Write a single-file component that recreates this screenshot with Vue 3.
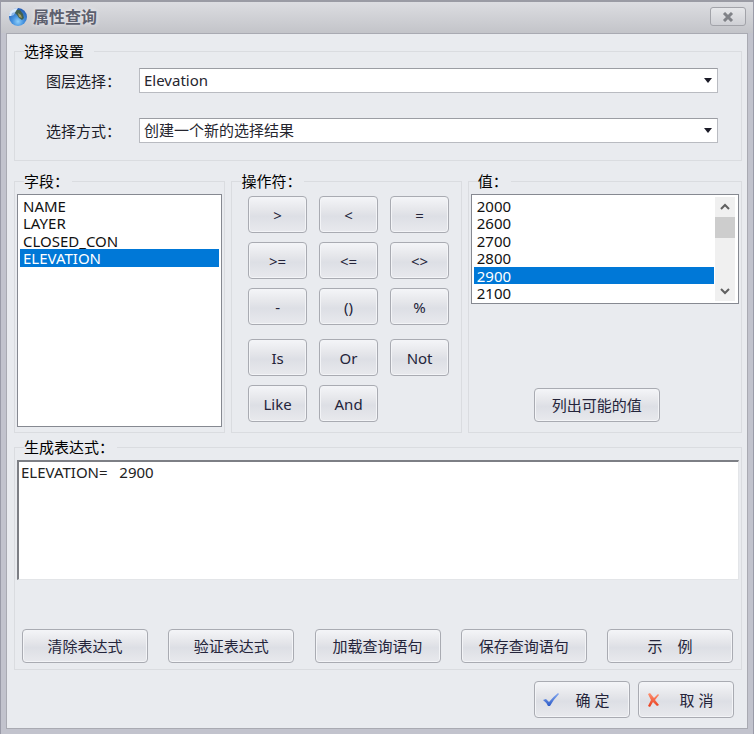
<template>
  <div class="window">
    <header class="title-bar">
      <svg class="app-icon" viewBox="0 0 20 20" aria-hidden="true">
        <defs>
          <radialGradient id="globe" cx="50%" cy="75%" r="75%">
            <stop offset="0" stop-color="#8fd0fa" />
            <stop offset="0.4" stop-color="#4794e0" />
            <stop offset="1" stop-color="#1f55ae" />
          </radialGradient>
        </defs>
        <circle cx="10" cy="10" r="9" fill="url(#globe)" />
        <path d="M8 3l4 0 3 4 1 4-2 2-3-2-2-3-2-2z" fill="#43604f" />
        <path d="M10 6l3 2 1 3-3-1z" fill="#a39a60" />
        <path d="M2 5q3-4 8-4L8 4 6 7 3 9 1 9Q1 7 2 5z" fill="#d9e8f8" />
        <path d="M4 6l3-1-1 3-3 1z" fill="#8db9e8" />
      </svg>
      <h1 class="title">属性查询</h1>
      <button class="close" type="button" aria-label="关闭">
        <svg width="12" height="10" viewBox="0 0 12 10">
          <path d="M2 1l8 8M10 1L2 9" stroke="#808288" stroke-width="3" />
        </svg>
      </button>
    </header>

    <form class="body" @submit.prevent>
      <fieldset class="group settings">
        <legend>选择设置</legend>
        <div class="setting">
          <label for="layer">图层选择：</label>
          <select id="layer" v-model="layer" class="combo">
            <option>Elevation</option>
          </select>
        </div>
        <div class="setting">
          <label for="mode">选择方式：</label>
          <select id="mode" v-model="mode" class="combo">
            <option>创建一个新的选择结果</option>
          </select>
        </div>
      </fieldset>

      <div class="columns">
        <fieldset class="group">
          <legend id="fields-label">字段：</legend>
          <div class="list-frame fields">
            <select v-model="field" class="list" size="4" aria-labelledby="fields-label">
              <option v-for="name in fields" :key="name">{{ name }}</option>
            </select>
          </div>
        </fieldset>

        <fieldset class="group operators-group">
          <legend>操作符：</legend>
          <div class="operators">
            <button v-for="op in symbols" :key="op" class="btn" type="button" @click="append(op)">
              {{ op }}
            </button>
          </div>
          <div class="operators">
            <button v-for="op in keywords" :key="op" class="btn" type="button" @click="append(op)">
              {{ op }}
            </button>
          </div>
        </fieldset>

        <fieldset class="group values-group">
          <legend id="values-label">值：</legend>
          <div class="list-frame values">
            <select ref="valueList" v-model="value" class="list" size="6" aria-labelledby="values-label">
              <option v-for="item in values" :key="item">{{ item }}</option>
            </select>
            <div class="scrollbar">
              <button type="button" aria-label="向上" @click="scroll(-17)">
                <svg width="10" height="8" viewBox="0 0 10 8">
                  <path d="M1 6l4-4 4 4" />
                </svg>
              </button>
              <div class="thumb"></div>
              <button type="button" aria-label="向下" @click="scroll(17)">
                <svg width="10" height="8" viewBox="0 0 10 8">
                  <path d="M1 2l4 4 4-4" />
                </svg>
              </button>
            </div>
          </div>
          <button class="btn wide list-values" type="button">列出可能的值</button>
        </fieldset>
      </div>

      <fieldset class="group">
        <legend id="expression-label">生成表达式：</legend>
        <textarea v-model="expression" class="expression" aria-labelledby="expression-label" spellcheck="false"></textarea>
        <div class="actions">
          <button class="btn wide" type="button" @click="expression = ''">清除表达式</button>
          <button class="btn wide" type="button">验证表达式</button>
          <button class="btn wide" type="button">加载查询语句</button>
          <button class="btn wide" type="button">保存查询语句</button>
          <button class="btn wide" type="button">示&#12288;例</button>
        </div>
      </fieldset>

      <footer class="footer">
        <button class="btn confirm" type="submit">
          <svg width="18" height="16" viewBox="0 0 18 16" aria-hidden="true">
            <defs>
              <linearGradient id="tick" x1="0" y1="0" x2="0" y2="1">
                <stop offset="0" stop-color="#86aaf0" />
                <stop offset="1" stop-color="#2d5bc8" />
              </linearGradient>
            </defs>
            <path d="M1 8l3-1 3 3Q11 5 16 1l1 1Q12 7 8 14H6Q4 10 1 8z" fill="url(#tick)" />
          </svg>
          <span>确 定</span>
        </button>
        <button class="btn confirm" type="button">
          <svg width="18" height="16" viewBox="0 0 18 16" aria-hidden="true">
            <defs>
              <linearGradient id="cross" x1="0" y1="0" x2="0" y2="1">
                <stop offset="0" stop-color="#ff9272" />
                <stop offset="1" stop-color="#e83c1c" />
              </linearGradient>
            </defs>
            <path d="M2 2l2-1 4 5 4-4 1 1-4 5 4 5-2 1-4-4-3 5-2-1 3-6z" fill="url(#cross)" />
          </svg>
          <span>取 消</span>
        </button>
      </footer>
    </form>
  </div>
</template>

<script setup>
import { ref } from 'vue'

const layer = ref('Elevation')
const mode = ref('创建一个新的选择结果')

const fields = ['NAME', 'LAYER', 'CLOSED_CON', 'ELEVATION']
const field = ref('ELEVATION')

const symbols = ['>', '<', '=', '>=', '<=', '<>', '-', '()', '%']
const keywords = ['Is', 'Or', 'Not', 'Like', 'And']

const values = ['2000', '2600', '2700', '2800', '2900', '2100']
const value = ref('2900')
const valueList = ref(null)

const expression = ref('ELEVATION=   2900')

const append = (text) => {
  expression.value += ` ${text} `
}

const scroll = (distance) => {
  valueList.value.scrollTop += distance
}
</script>

<style>
body {
  margin: 0;
}
</style>

<style scoped>
* {
  box-sizing: border-box;
}

.window {
  display: flex;
  flex-direction: column;
  min-height: 100vh;
  padding: 0 5px 5px;
  border: 1px solid #9a9ba8;
  border-top: 2px solid #9a9ba4;
  background: #c2c3cd;
  color: #1c1c28;
  font-family: 'Noto Sans', 'Noto Sans CJK SC', sans-serif;
  font-size: 15px;
  line-height: 20px;
}

.title-bar {
  display: flex;
  align-items: center;
  gap: 5px;
  height: 31px;
  margin: 0 -5px;
  padding: 0 7px 2px;
  background: linear-gradient(#dcdde1, #c3c4c9);
}

.app-icon {
  width: 20px;
  height: 20px;
}

.title {
  flex: 1;
  margin: 0;
  color: #5d606e;
  font-size: 16px;
  font-weight: bold;
  text-shadow: 0 0 4px #f4f4f8;
}

.close {
  display: flex;
  align-items: center;
  justify-content: center;
  width: 36px;
  height: 19px;
  padding: 0;
  border: 1px solid #a2a3a9;
  border-radius: 3px;
  background: linear-gradient(#e6e7ea, #cfd0d5);
}

.body {
  flex: 1;
  padding: 7px 5px 10px 7px;
  border: 1px solid #a9aab2;
  background: #e9ebef;
}

.group {
  min-width: 0;
  margin: 0;
  padding: 0 2px;
  border: 1px solid #dadce0;
}

.group legend {
  margin-left: 7px;
  padding: 0 3px 0 0;
  color: #000;
}

.settings {
  padding: 7px 23px 17px 31px;
}

.settings legend {
  margin-left: -22px;
  padding-right: 10px;
}

.setting {
  display: flex;
  align-items: center;
}

.setting + .setting {
  margin-top: 25px;
}

.setting label {
  width: 93px;
}

.combo {
  flex: 1;
  min-width: 0;
  height: 25px;
  padding: 0 24px 2px 4px;
  border: 1px solid #b9bbc1;
  border-top-color: #9b9da3;
  border-radius: 0;
  appearance: none;
  background: #fff url("data:image/svg+xml,%3Csvg xmlns='http://www.w3.org/2000/svg' width='8' height='5'%3E%3Cpath d='M0 0h8L4 5z' fill='%231c1c28'/%3E%3C/svg%3E") no-repeat right 5px center;
  color: #26262f;
  font: inherit;
}

.columns {
  display: grid;
  grid-template-columns: 212fr 231fr 275fr;
  gap: 6px;
  margin: 10px 0 4px;
}

.list-frame {
  display: flex;
  gap: 1px;
  margin-top: 3px;
  padding: 2px;
  border: 1px solid #868991;
  background: #fff;
}

.fields {
  height: 233px;
  margin-bottom: 5px;
}

.values {
  height: 110px;
}

.list {
  flex: 1;
  min-width: 0;
  height: 100%;
  padding: 0;
  border: 0;
  border-radius: 0;
  outline: 0;
  background: #fff;
  color: #111;
  font: inherit;
  overflow: hidden;
}

.list option {
  display: flex;
  align-items: center;
  height: 17px;
  min-height: 0;
  padding: 0 3px;
}

.list option:nth-child(even) {
  height: 18px;
}

.list option:checked {
  background: linear-gradient(#0078d7, #0078d7);
  -webkit-text-fill-color: #fff;
}

.scrollbar {
  display: flex;
  flex-direction: column;
  width: 20px;
  margin-right: 1px;
  background: #f0f0f0;
}

.scrollbar button {
  display: flex;
  align-items: center;
  justify-content: center;
  height: 20px;
  padding: 0;
  border: 0;
  background: none;
}

.scrollbar button:last-child {
  margin-top: auto;
}

.scrollbar path {
  fill: none;
  stroke: #606060;
  stroke-width: 2;
}

.thumb {
  height: 21px;
  background: #cdcdcd;
}

.btn {
  padding: 0;
  border: 1px solid #a9abb2;
  border-radius: 4px;
  background: linear-gradient(#f4f5f8, #e6e7eb 35%, #dddfe5 55%, #e8e9ed);
  box-shadow: inset 0 0 0 1px #f3f4f7;
  color: #24243a;
  font: inherit;
  white-space: nowrap;
}

.operators-group {
  padding-left: 6px;
}

.operators-group legend {
  margin-left: 3px;
}

.operators {
  display: grid;
  grid-template-columns: repeat(3, 59px);
  grid-auto-rows: 37px;
  justify-content: center;
  gap: 9px 12px;
  margin-top: 5px;
}

.operators + .operators {
  margin-top: 14px;
}

.values-group {
  display: flex;
  flex-direction: column;
}

.wide {
  width: 126px;
  height: 34px;
}

.list-values {
  margin: auto 0 10px 63px;
}

.expression {
  display: block;
  width: 100%;
  height: 120px;
  margin-top: 3px;
  padding: 0 2px;
  border: 1px solid #e3e5e8;
  border-top: 2px solid #7d7f85;
  border-left: 2px solid #7d7f85;
  border-radius: 0;
  outline: 0;
  background: #fff;
  color: #222;
  font: inherit;
  resize: none;
}

.actions {
  display: flex;
  justify-content: space-between;
  margin: 49px 0 6px;
  padding: 0 6px 0 5px;
}

.footer {
  display: flex;
  justify-content: flex-end;
  gap: 8px;
  margin-top: 11px;
  padding-right: 8px;
}

.confirm {
  display: flex;
  align-items: center;
  width: 96px;
  height: 37px;
  padding: 0 7px;
}

.confirm span {
  flex: 1;
  padding-left: 3px;
}
</style>
